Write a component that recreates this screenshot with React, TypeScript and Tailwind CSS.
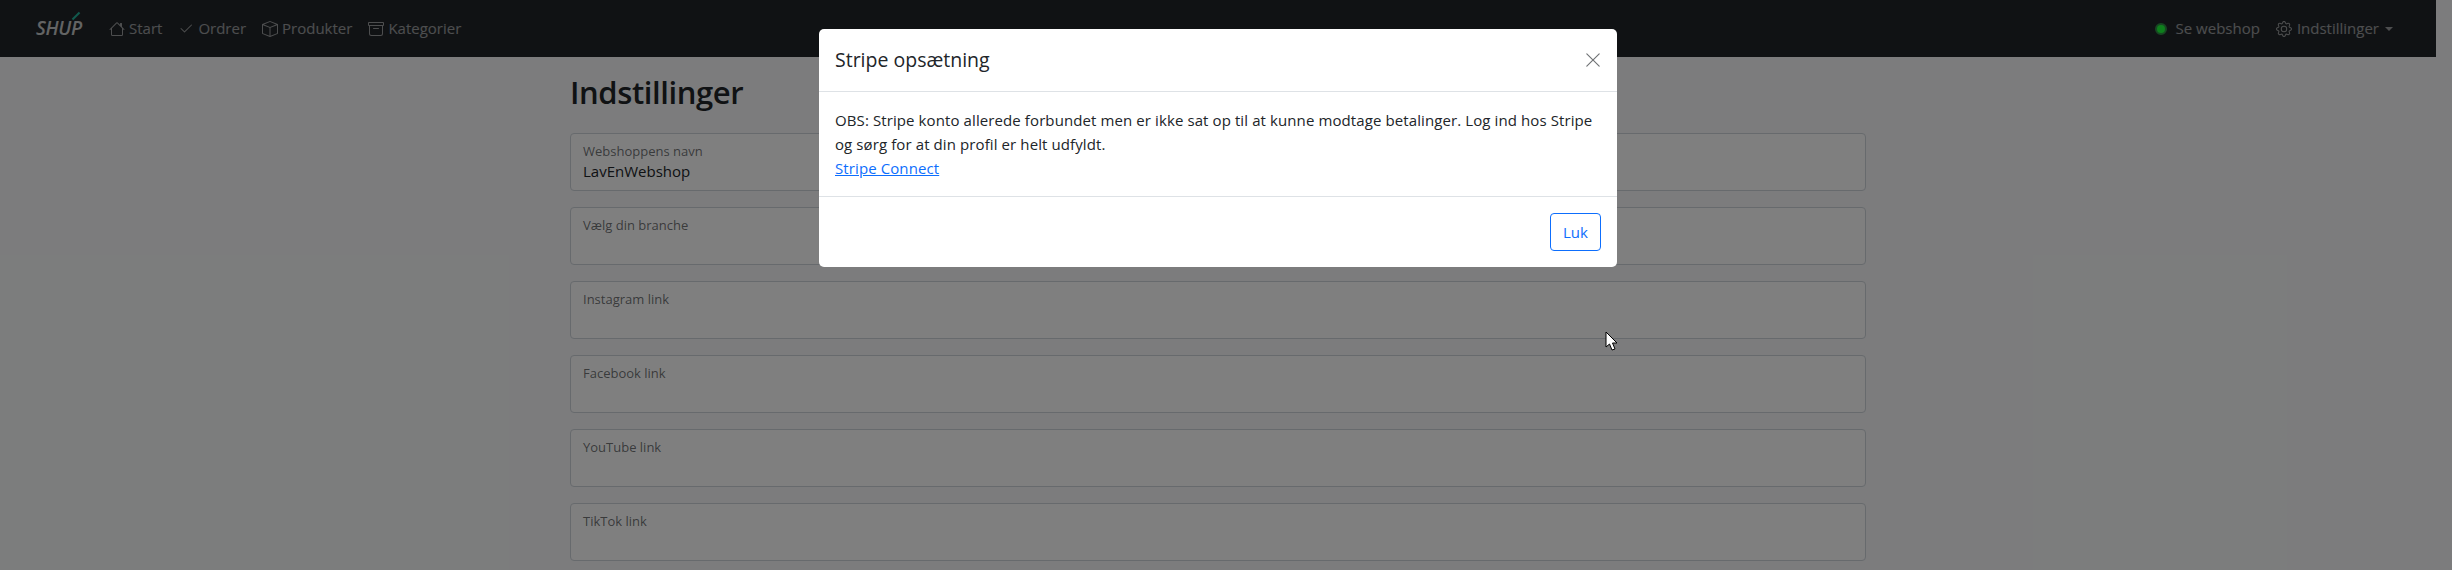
import React from "react";
import { BsArchive, BsBox, BsCheck2, BsGear, BsHouse, BsXLg } from "react-icons/bs";

const fields = [
  { label: "Webshoppens navn", value: "LavEnWebshop" },
  { label: "Vælg din branche", value: "" },
  { label: "Instagram link", value: "" },
  { label: "Facebook link", value: "" },
  { label: "YouTube link", value: "" },
  { label: "TikTok link", value: "" },
];

const navLinks = [
  { label: "Start", icon: <BsHouse size={16} /> },
  { label: "Ordrer", icon: <BsCheck2 size={16} /> },
  { label: "Produkter", icon: <BsBox size={16} /> },
  { label: "Kategorier", icon: <BsArchive size={16} /> },
];

const Navbar = () => {
  return (
    <nav className="h-[57px] shrink-0 bg-[#212529] flex items-center justify-between pl-[36px] pr-[43px] text-[15px] text-white/55">
      <div className="flex items-center">
        {/* logo */}
        <div className="relative w-[48px] mr-[25px] text-[19px] font-semibold italic text-white/75 tracking-[-0.3px] leading-none">
          SHUP
          <span className="absolute left-[35px] -top-[4px] w-[10px] h-[2px] bg-[#23b39b] -rotate-45" />
        </div>

        {/* links */}
        <div className="flex items-center gap-[16px]">
          {navLinks.map((link) => (
            <div key={link.label} className="flex items-center gap-[4px]">
              {link.icon}
              <span>{link.label}</span>
            </div>
          ))}
        </div>
      </div>

      {/* right side */}
      <div className="flex items-center">
        <span className="w-[12px] h-[12px] rounded-full bg-[#1cff38] border-2 border-[#2f8f45] mr-[9px]" />
        <span>Se webshop</span>
        <BsGear size={16} className="ml-[16px] mr-[5px]" />
        <span>Indstillinger</span>
        <span className="ml-[6px] w-0 h-0 border-x-[4px] border-x-transparent border-t-[4px] border-t-white/55" />
      </div>
    </nav>
  );
};

const SettingsForm = () => {
  return (
    <main className="w-[1296px] mx-auto flex flex-col">
      <h2 className="mt-[16px] mb-[22px] text-[31px] leading-[38px] font-semibold tracking-[-0.4px] text-[#212529]">Indstillinger</h2>
      {fields.map((field) => (
        <div key={field.label} className="h-[58px] shrink-0 mb-[16px] bg-white border border-[#ced4da] rounded-[4px] pl-[12px] pt-[8px]">
          <div className="text-[13px] leading-[18px] text-[#212529]/65">{field.label}</div>
          <div className="text-[15px] leading-[23px] text-[#212529]">{field.value}</div>
        </div>
      ))}
    </main>
  );
};

const StripeModal = () => {
  return (
    <div className="absolute left-[819px] top-[29px] w-[798px] h-[238px] bg-white rounded-[5px] flex flex-col text-[#212529]">
      {/* header */}
      <div className="h-[63px] shrink-0 border-b border-[#dee2e6] flex items-center justify-between pl-[16px] pr-[15px]">
        <h5 className="text-[19.5px] font-medium">Stripe opsætning</h5>
        <BsXLg size={18} className="text-[#212529]/65" />
      </div>

      {/* body */}
      <div className="h-[105px] shrink-0 border-b border-[#dee2e6] px-[16px] pt-[16px] text-[15px] leading-[24px] tracking-[0.1px]">
        OBS: Stripe konto allerede forbundet men er ikke sat op til at kunne modtage betalinger. Log ind hos Stripe
        <br />
        og sørg for at din profil er helt udfyldt.
        <br />
        <a href="#" className="text-[#0d6efd] underline">Stripe Connect</a>
      </div>

      {/* footer */}
      <div className="flex-1 flex items-center justify-end pr-[16px]">
        <button className="w-[51px] h-[38px] border border-[#0d6efd] rounded-[4px] text-[15px] text-[#0d6efd]">Luk</button>
      </div>
    </div>
  );
};

const App = () => {
  return (
    <div className="relative w-[2452px] h-[570px] overflow-hidden flex font-['Open_Sans','Noto_Sans',sans-serif]">
      <div className="w-[2436px] h-full flex flex-col bg-[#f8f9fa]">
        <Navbar />
        <SettingsForm />
      </div>
      {/* scrollbar */}
      <div className="w-[16px] h-full bg-[#f8f9fa]" />

      {/* backdrop */}
      <div className="absolute inset-0 bg-black/50" />

      <StripeModal />

      {/* mouse cursor */}
      <svg className="absolute left-[1605px] top-[331px]" width="14" height="21" viewBox="0 0 14 21">
        <path d="M1 1 L1 16 L4.5 13 L7 19 L10 18 L7.5 12 L12 12 Z" fill="#fff" stroke="#000" strokeWidth="1" />
      </svg>
    </div>
  );
};

export default App;
